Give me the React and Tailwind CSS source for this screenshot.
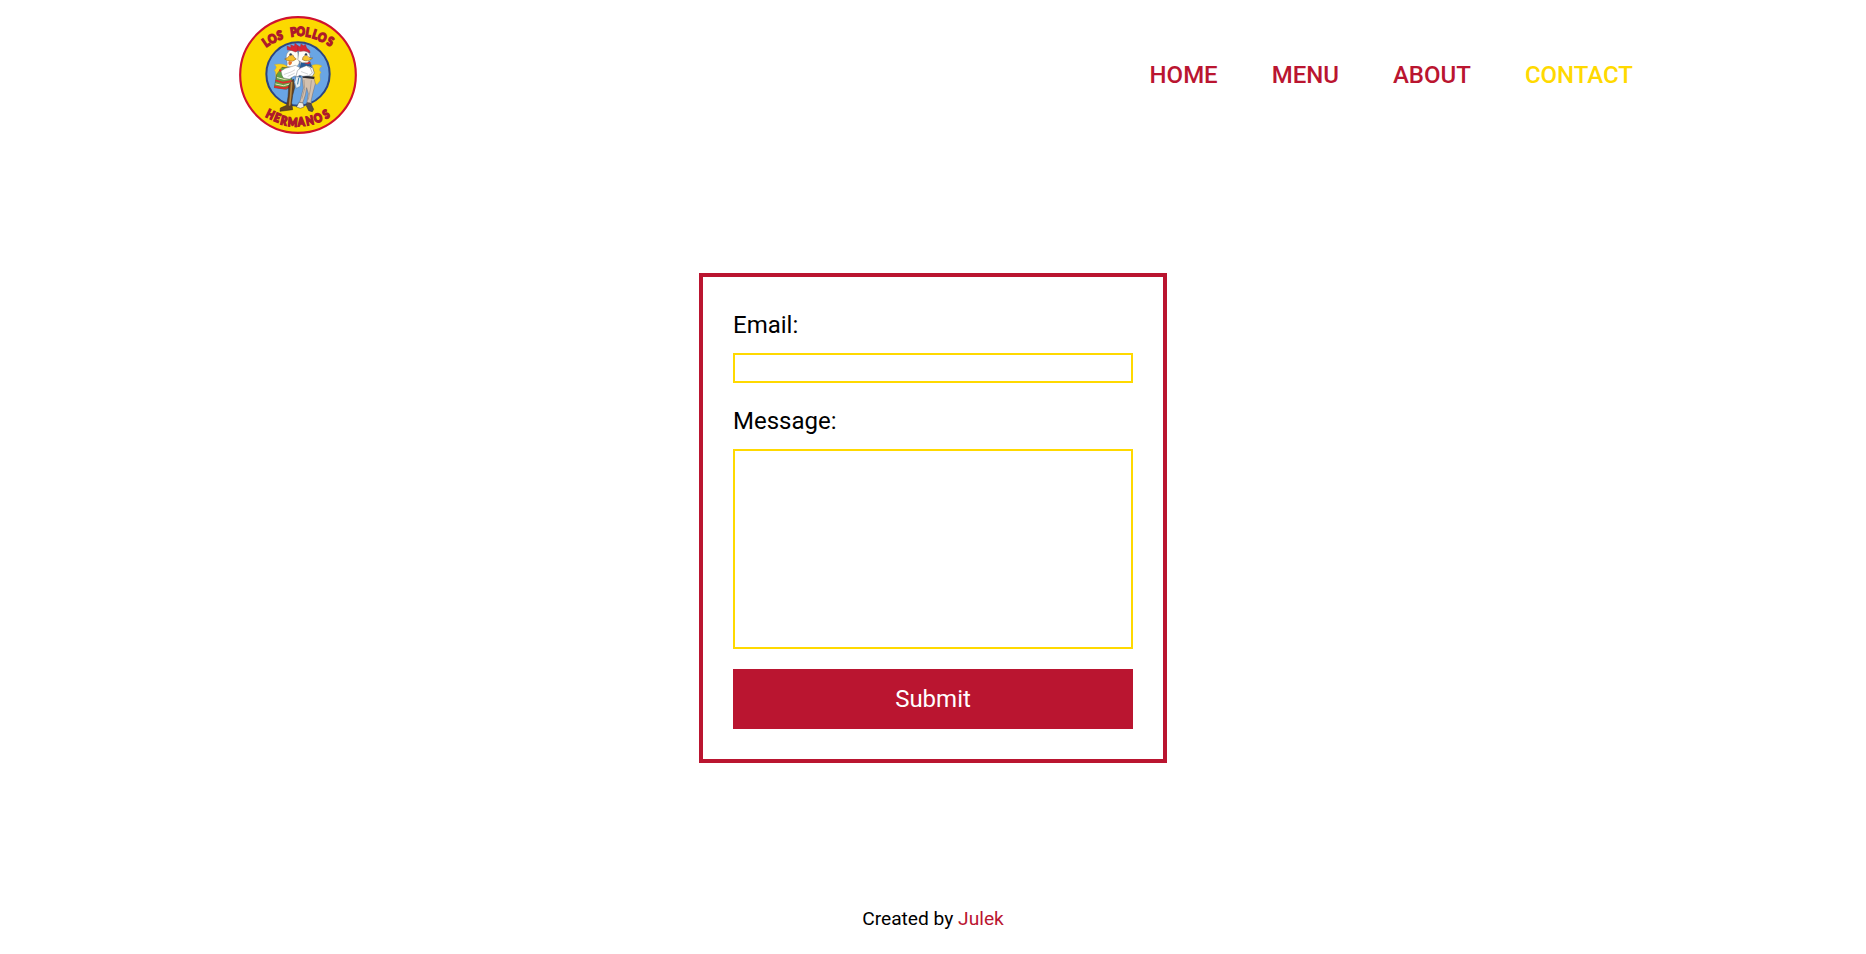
import React from "react";

const topLetters = [
  ["L", 107, 112, -34],
  ["O", 127, 101, -27],
  ["S", 149, 91, -14],
  ["P", 191, 81, -8],
  ["O", 212, 79, 4],
  ["L", 235, 82, 10],
  ["L", 256, 88, 18],
  ["O", 277, 97, 26],
  ["S", 301, 109, 24],
];
const bottomLetters = [
  ["H", 121, 328, 26],
  ["E", 142, 338, 22],
  ["R", 162, 347, 14],
  ["M", 188, 351, 5],
  ["A", 214, 350, -4],
  ["N", 239, 346, -12],
  ["O", 264, 339, -22],
  ["S", 288, 327, -30],
];

function Letters({ items, size }) {
  return items.map(([char, x, y, angle], i) => (
    <text key={i} transform={`translate(${x} ${y}) rotate(${angle}) scale(.84 1)`} y={size * 0.36} fontSize={size} textAnchor="middle">{char}</text>
  ));
}

function Logo() {
  return (
    <svg className="size-[130px] shrink-0" viewBox="9 15 390 390" role="img" aria-label="Los Pollos Hermanos">
      <circle cx="204" cy="210" r="173.500" fill="#fcd900" stroke="#d0122f" strokeWidth="6.500" />
      <circle cx="204" cy="207" r="95" fill="#69a5e4" stroke="#2b4580" strokeWidth="6" />
      <g fontFamily="Lato, sans-serif" fontWeight="900" fill="#b5162b" stroke="#ae1a29" strokeWidth="4.500">
        <Letters items={topLetters} size={37} />
        <Letters items={bottomLetters} size={36} />
      </g>
      <g transform="translate(90 90)" strokeLinejoin="round" strokeLinecap="round">
        {/* tails */}
        <path d="M88 100C77 86 60 85 43 89C53 95 48 101 43 106C50 112 45 121 49 130L82 124Z" fill="#fbd51a" stroke="#c7a526" strokeWidth="1.200" />
        <path d="M145 101C155 87 171 86 186 93C178 99 176 105 183 112C176 119 182 129 180 137L171 149L148 132Z" fill="#fbd51a" stroke="#c7a526" strokeWidth="1.200" />
        {/* poncho */}
        <path d="M67 97L92 99L97 153L79 163L43 158L50 119Z" fill="#61a044" stroke="#4c3725" strokeWidth="1.500" />
        <path d="M60 106L74 114M49 137L68 143L94 139M45 155L73 160L95 152" fill="none" stroke="#d92e2c" strokeWidth="6" />
        <path d="M52 128L72 133L90 130M47 147L70 152L94 146" fill="none" stroke="#f2e4bd" strokeWidth="3" />
        {/* left legs and boots */}
        <path d="M87 150L100 132L104 157L98 181L95 203L98 224L60 229L61 219L80 211L84 186Z" fill="#654321" stroke="#33261b" strokeWidth="1.500" />
        <path d="M95 142L92 181L89 210" fill="none" stroke="#ba8a40" strokeWidth="5" />
        {/* trousers */}
        <path d="M127 127L162 130L166 146L158 176L153 199L155 208L140 208L145 176L140 158L136 180L128 204L119 203L130 160Z" fill="#d3c1af" stroke="#6a5a50" strokeWidth="1.200" />
        <path d="M154 137L151 164L145 193M132 136L134 161L126 190" fill="none" stroke="#9c8c80" strokeWidth="2" />
        <path d="M127 121L164 125L162 132L129 128Z" fill="#2b2828" />
        {/* shirt and vest */}
        <path d="M119 80L143 77L157 95L163 114L157 124L125 122Z" fill="#f7f7f2" stroke="#3c4e70" strokeWidth="1.500" />
        <path d="M124 78L146 76L153 90L155 98L148 94L139 92L132 98L120 127L111 117L120 100Z" fill="#245a99" stroke="#203c64" strokeWidth="1.500" />
        <path d="M137 80L153 81L146 88L133 85Z" fill="#d12a35" />
        {/* left bird */}
        <path d="M91 46Q105 46 113 51L118 84L108 99L80 94Q84 88 79 73Q76 53 91 46Z" fill="#fffef6" stroke="#776c60" strokeWidth="1.200" />
        <path d="M82 44L81 33L93 38L92 29L103 34L105 25L116 34L116 46L106 51L94 46Z" fill="#d82635" stroke="#9d2532" strokeWidth="1.200" />
        <path d="M89 61Q84 70 74 72L83 77Q99 83 109 72Q101 68 99 61Z" fill="#f6bf28" stroke="#81511e" strokeWidth="1.500" />
        <path d="M87 78Q82 84 87 91Q96 90 96 80Z" fill="#e8752b" />
        <circle cx="92" cy="58" r="3.500" fill="#304152" />
        {/* right bird */}
        <path d="M117 49Q130 44 144 51Q152 58 150 76L142 83L126 83L114 75Z" fill="#fffef8" stroke="#776c60" strokeWidth="1.200" />
        <path d="M113 46L113 32L121 36L123 27L131 32L136 28L140 39L149 47L150 54Q134 44 122 49Z" fill="#d82635" stroke="#9d2532" strokeWidth="1.200" />
        <path d="M133 62Q127 67 127 74Q144 83 158 69Q145 70 142 62Z" fill="#f6c430" stroke="#81511e" strokeWidth="1.500" />
        <circle cx="138" cy="58" r="3.500" fill="#304152" />
        {/* folded wings */}
        <path d="M66 121L63 108L76 100L94 95L106 91L120 98L112 116L116 125L103 123L88 132L71 129Z" fill="#fff" stroke="#656b73" strokeWidth="1.300" />
        <path d="M122 99L139 92L151 99L157 114L146 122L129 124L119 121L107 128L112 108Z" fill="#fff" stroke="#656b73" strokeWidth="1.300" />
        <path d="M73 118L93 111L104 105M84 124L103 115M124 110L143 117" fill="none" stroke="#a9abaf" strokeWidth="1.500" />
        <path d="M109 125L123 128L121 154L109 160L104 142Z" fill="#e4edf3" stroke="#547091" strokeWidth="1.300" />
        <path d="M116 130L113 147" stroke="#3978a8" strokeWidth="3" />
        {/* shoes */}
        <path d="M142 203L152 204L161 223L157 230L146 227L140 214Z" fill="#5b4c46" stroke="#302a28" strokeWidth="1.500" />
        <path d="M118 202L129 204L132 216L121 220L110 216Z" fill="#eeeae3" stroke="#514b48" strokeWidth="1.500" />
      </g>
    </svg>
  );
}

const links = ["HOME", "MENU", "ABOUT", "CONTACT"];

export default function App() {
  return (
    <div className="flex min-h-[954px] flex-col bg-white font-['Roboto',sans-serif] text-black">
      <header className="mx-auto flex h-[150px] w-[1400px] items-center justify-between">
        <Logo />
        <nav>
          <ul className="flex gap-[54px] text-2xl leading-9 font-medium">
            {links.map((link) => (
              <li key={link}>
                <a href="#" className={link === "CONTACT" ? "text-[#ffd900]" : "text-[#ba1530]"}>{link}</a>
              </li>
            ))}
          </ul>
        </nav>
      </header>
      <main className="flex grow justify-center pt-[123px]">
        <form className="flex w-[468px] flex-col self-start border-4 border-[#ba1530] p-[30px] text-2xl leading-9">
          <label htmlFor="email" className="mb-2.5">Email:</label>
          <input id="email" type="email" className="mb-5 h-[30px] border-2 border-[#ffd900] outline-none" />
          <label htmlFor="message" className="mb-2.5">Message:</label>
          <textarea id="message" className="mb-5 h-[200px] resize-none border-2 border-[#ffd900] outline-none" />
          <button type="button" className="h-[60px] bg-[#ba1530] text-white">Submit</button>
        </form>
      </main>
      <footer className="flex h-[72px] items-center justify-center text-[19.2px] leading-[29px]">
        <p>Created by <a href="#" className="text-[#ba1530]">Julek</a></p>
      </footer>
    </div>
  );
}
